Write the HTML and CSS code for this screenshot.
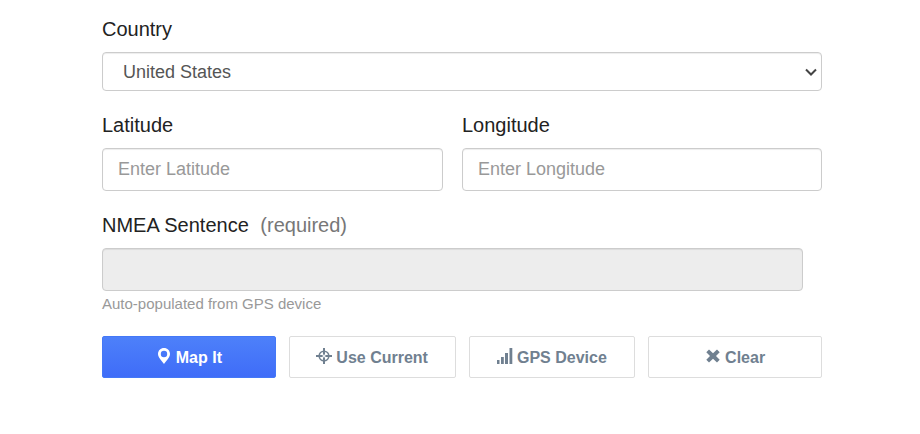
FILE: index.html
```html
<!DOCTYPE html>
<html lang="en">
<head>
<meta charset="utf-8">
<title>GPS Coordinates</title>
<link rel="stylesheet" href="styles.css">
</head>
<body>
<form class="form">
  <div class="field">
    <label class="label" for="country">Country</label>
    <div class="select-wrap">
      <select class="control select" id="country">
        <option>United States</option>
      </select>
      <svg class="chevron" viewBox="0 0 12 8" aria-hidden="true"><path d="M1 1.500 6 6.500l5-5" fill="none" stroke="currentColor" stroke-width="2"/></svg>
    </div>
  </div>
  <div class="row">
    <div class="field field-inset">
      <label class="label" for="latitude">Latitude</label>
      <input class="control" id="latitude" type="text" placeholder="Enter Latitude">
    </div>
    <div class="field">
      <label class="label" for="longitude">Longitude</label>
      <input class="control" id="longitude" type="text" placeholder="Enter Longitude">
    </div>
  </div>
  <div class="field field-inset">
    <label class="label" for="nmea">NMEA Sentence <span class="required">(required)</span></label>
    <input class="control" id="nmea" type="text" disabled>
    <p class="help">Auto-populated from GPS device</p>
  </div>
  <div class="actions">
    <button class="button primary" type="button">
      <svg class="icon" viewBox="0 0 16 16" aria-hidden="true"><path fill-rule="evenodd" d="M8 0C4.600 0 2 2.600 2 6c0 3.200 3.600 7 6 10 2.400-3 6-6.800 6-10 0-3.400-2.600-6-6-6zm0 2.800a3.200 3.200 0 1 1 0 6.400 3.200 3.200 0 0 1 0-6.400z"/></svg>
      Map It
    </button>
    <button class="button" type="button">
      <svg class="icon" viewBox="0 0 16 16" aria-hidden="true"><circle cx="8" cy="8" r="4.800" fill="none" stroke="currentColor" stroke-width="1.600"/><path d="M7 0h2v6L8 7.500 7 6zM7 16h2v-6L8 8.500 7 10zM0 7h6l1.500 1L6 9H0zM16 7h-6L8.500 8l1.500 1h6z"/></svg>
      Use Current
    </button>
    <button class="button" type="button">
      <svg class="icon" viewBox="0 0 16 16" aria-hidden="true"><path d="M0 12h2.500v4H0zM4 9h2.800v7H4zM8 5h3v11H8zM12.500 0h2.800v16h-2.800z"/></svg>
      GPS Device
    </button>
    <button class="button" type="button">
      <svg class="icon" viewBox="0 0 16 16" aria-hidden="true"><path d="M4 1.500 8 5.200l4-3.700 2.700 2.700L11 8l3.700 3.800L12 14.500l-4-3.700-4 3.700-2.700-2.700L5 8 1.300 4.200z"/></svg>
      Clear
    </button>
  </div>
</form>
</body>
</html>
```
FILE: styles.css
```css
* {
  box-sizing: border-box;
}

body {
  margin: 0;
  background: #fff;
  color: #222;
  font-family: "Liberation Sans", Arial, sans-serif;
}

.form {
  display: flex;
  flex-direction: column;
  gap: 20px;
  padding: 15px 98px 20px 102px;
}

.row {
  display: grid;
  grid-template-columns: 1fr 1fr;
}

.field-inset {
  padding-right: 19px;
}

.label {
  display: block;
  margin-bottom: 9px;
  font-size: 20px;
  line-height: 28px;
}

.required {
  margin-left: 6px;
  color: #777;
}

.control {
  display: block;
  width: 100%;
  height: 43px;
  padding: 0 15px;
  border: 1px solid #ccc;
  border-radius: 4px;
  background: #fff;
  box-shadow: inset 0 1px 1px rgba(0, 0, 0, 0.075);
  color: #555;
  font-family: inherit;
  font-size: 18px;
}

.control::placeholder {
  color: #999;
  opacity: 1;
}

.control:disabled {
  background: #ededed;
}

.select-wrap {
  position: relative;
}

.select {
  height: 39px;
  padding: 0 24px 0 20px;
  appearance: none;
}

.chevron {
  position: absolute;
  top: 16px;
  right: 5px;
  width: 12px;
  height: 8px;
  color: #444;
  pointer-events: none;
}

.help {
  margin: 3px 0 0;
  color: #999;
  font-size: 15px;
  line-height: 20px;
}

.actions {
  display: grid;
  grid-template-columns: 174fr 167fr 167fr 174fr;
  gap: 13px;
  padding-top: 2px;
}

.button {
  display: flex;
  align-items: center;
  justify-content: center;
  gap: 4px;
  height: 42px;
  padding: 1px 0 0;
  border: 1px solid #ddd;
  border-radius: 2px;
  background: #fff;
  color: #708090;
  font-family: inherit;
  font-size: 16px;
  font-weight: bold;
  white-space: nowrap;
}

.primary {
  border-color: #4478f7;
  background: linear-gradient(#4d80fa, #3f6cf8);
  color: #fff;
}

.icon {
  width: 16px;
  height: 16px;
  margin-bottom: 3px;
  fill: currentColor;
}
```
